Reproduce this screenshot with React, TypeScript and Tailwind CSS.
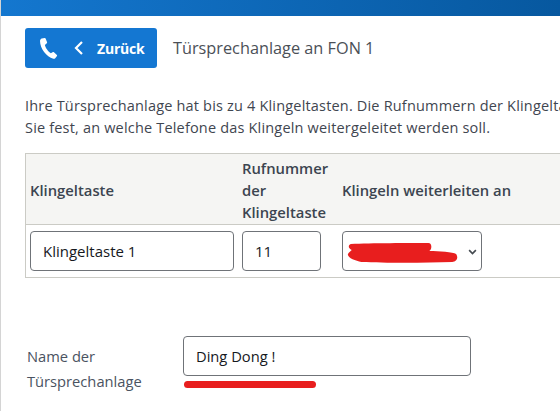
import React from "react";

const font = { fontFamily: '"Open Sans", "Noto Sans", sans-serif' };

function Phone() {
  return (
    <svg width="22" height="22" viewBox="0 0 24 24" fill="#fff" className="-ml-px">
      <path d="M5.2 1.6 8.3 1c.5-.1.9.2 1.1.6l1.600 4.200c.2.4 0 .8-.3 1.100L8.600 8.700c.6 2.900 3.700 7.500 6.500 9l2.300-1.300c.4-.2.800-.2 1.100.1l3.200 3.100c.3.300.4.800.1 1.200l-1.900 2.300c-.5.600-1.300.9-2.100.7C10.400 21.500 3.300 12.500 3.300 4.300c0-1.300.8-2.400 1.900-2.700Z" />
    </svg>
  );
}

export default function App() {
  return (
    <div className="w-[560px] h-[411px] overflow-hidden bg-white border-l border-[#d4d4d4] text-[15px]" style={font}>
      <div className="h-4 bg-gradient-to-r from-[#1477cf] to-[#07589f]" />
      <div className="pl-6 w-[700px]">
        <div className="flex items-center mt-3 gap-4">
          <div className="flex items-center w-[132px] h-10 rounded-[3px] bg-[#1477d2] text-white pl-[13px]">
            <Phone />
            <svg width="12" height="16" viewBox="0 0 12 16" fill="none" stroke="#fff" strokeWidth="2.200" className="ml-[14px]">
              <path d="M9 2 3 8l6 6" />
            </svg>
            <span className="ml-[12px] font-bold text-[14px] tracking-[-0.2px]">Zurück</span>
          </div>
          <span className="text-[16.300px] text-[#4b5057]">Türsprechanlage an FON 1</span>
        </div>
        <div className="mt-[27px] text-[#3f4650] leading-[22px] text-[14.500px] tracking-[0.18px] whitespace-nowrap">
          <div>Ihre Türsprechanlage hat bis zu 4 Klingeltasten. Die Rufnummern der Klingeltasten legen</div>
          <div>Sie fest, an welche Telefone das Klingeln weitergeleitet werden soll.</div>
        </div>
        <div className="mt-[14px] border border-[#cbcbc5] border-r-0">
          <div className="grid grid-cols-[216px_100px_1fr] h-[71px] pt-[2px] bg-[#f5f5f3] border-b border-[#cbcbc5] items-center font-semibold text-[#3c4550] text-[14.800px] leading-[22px]">
            <div className="pl-[4px]">Klingeltaste</div>
            <div>Rufnummer<br />der<br />Klingeltaste</div>
            <div>Klingeln weiterleiten an</div>
          </div>
          <div className="grid grid-cols-[216px_100px_1fr] h-[52px] items-center text-[15px]">
            <div className="pl-[4px]">
              <div className="w-[204px] h-10 rounded-[4px] border border-[#6f7378] flex items-center pl-[12px] text-[#16191d]">Klingeltaste 1</div>
            </div>
            <div>
              <div className="w-[79px] h-10 rounded-[4px] border border-[#6f7378] flex items-center pl-[12px] text-[#16191d]">11</div>
            </div>
            <div>
              <div className="relative w-[140px] h-10 rounded-[4px] border border-[#6f7378]">
                <svg width="111" height="20" viewBox="0 0 116 20" preserveAspectRatio="none" className="absolute left-[4px] top-[11px]" fill="#e81e1e">
                  <path d="M4 1C25 0 65 0 85 0c4 0 4 6 1 8 10 0 25 1 28 3 3 4 0 8-4 8-30 1-70 1-95 0-6-1-15-4-14-8 1-2 3-3 4-4C1 5 1 2 4 1Z" />
                </svg>
                <svg width="9" height="6" viewBox="0 0 12 8" fill="none" stroke="#444a50" strokeWidth="2.200" className="absolute right-[4px] top-[17px]">
                  <path d="M1.500 1.500 6 6l4.500-4.500" />
                </svg>
              </div>
            </div>
          </div>
        </div>
        <div className="flex mt-[58px] ml-[2px]">
          <div className="w-[156px] text-[#4a5361] text-[14.700px] leading-[25px] mt-[8px]">Name der<br />Türsprechanlage</div>
          <div>
            <div className="w-[288px] h-10 rounded-[4px] border border-[#6f7378] flex items-center pl-[12px] text-[#16191d] text-[14.700px]">Ding Dong !</div>
            <div className="mt-[5px] ml-[1px] w-[132px] h-[7px] rounded-full bg-[#e81e1e]" />
          </div>
        </div>
      </div>
    </div>
  );
}
